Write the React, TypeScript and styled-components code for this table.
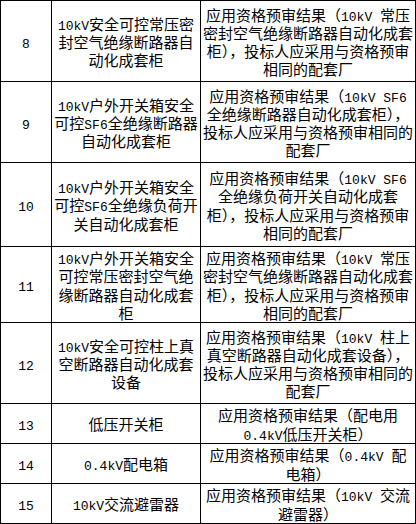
import React from "react";
import styled, { createGlobalStyle } from "styled-components";

const GlobalStyle = createGlobalStyle`
  html, body {
    margin: 0;
    padding: 0;
    background: #ffffff;
  }
  body {
    font-family: "Noto Sans CJK SC", "Noto Sans", sans-serif;
    color: #000000;
  }
`;

type Row = { no: string; height: number; name: string[]; desc: string[] };

const rows: Row[] = [
  {
    no: "8",
    height: 81,
    name: ["10kV安全可控常压密", "封空气绝缘断路器自", "动化成套柜"],
    desc: ["应用资格预审结果（10kV 常压", "密封空气绝缘断路器自动化成套", "柜），投标人应采用与资格预审", "相同的配套厂"],
  },
  {
    no: "9",
    height: 81,
    name: ["10kV户外开关箱安全", "可控SF6全绝缘断路器", "自动化成套柜"],
    desc: ["应用资格预审结果（10kV SF6", "全绝缘断路器自动化成套柜），", "投标人应采用与资格预审相同的", "配套厂"],
  },
  {
    no: "10",
    height: 84,
    name: ["10kV户外开关箱安全", "可控SF6全绝缘负荷开", "关自动化成套柜"],
    desc: ["应用资格预审结果（10kV SF6", "全绝缘负荷开关自动化成套", "柜），投标人应采用与资格预审", "相同的配套厂"],
  },
  {
    no: "11",
    height: 76,
    name: ["10kV户外开关箱安全", "可控常压密封空气绝", "缘断路器自动化成套", "柜"],
    desc: ["应用资格预审结果（10kV 常压", "密封空气绝缘断路器自动化成套", "柜），投标人应采用与资格预审", "相同的配套厂"],
  },
  {
    no: "12",
    height: 81,
    name: ["10kV安全可控柱上真", "空断路器自动化成套", "设备"],
    desc: ["应用资格预审结果（10kV 柱上", "真空断路器自动化成套设备），", "投标人应采用与资格预审相同的", "配套厂"],
  },
  {
    no: "13",
    height: 40,
    name: ["低压开关柜"],
    desc: ["应用资格预审结果（配电用", "0.4kV低压开关柜）"],
  },
  {
    no: "14",
    height: 40,
    name: ["0.4kV配电箱"],
    desc: ["应用资格预审结果（0.4kV 配", "电箱）"],
  },
  {
    no: "15",
    height: 40,
    name: ["10kV交流避雷器"],
    desc: ["应用资格预审结果（10kV 交流", "避雷器）"],
  },
];

const Table = styled.div<{ $rows: string }>`
  box-sizing: border-box;
  width: 416px;
  display: grid;
  grid-template-columns: 51px 149px 215px;
  grid-template-rows: ${(p) => p.$rows};
  border-top: 1px solid #000;
  border-left: 1px solid #000;
`;

const Cell = styled.div`
  box-sizing: border-box;
  border-right: 1px solid #000;
  border-bottom: 1px solid #000;
  display: flex;
  flex-direction: column;
  align-items: center;
  justify-content: center;
  padding-top: 2px;
  font-size: 15px;
  line-height: 18.2px;
  text-align: center;
  white-space: nowrap;
`;

const Line = styled.div`
  display: block;
  height: 18.2px;
`;

const Latin = styled.span`
  font-family: "Liberation Mono", "DejaVu Sans Mono", monospace;
  font-size: 13px;
`;

function renderText(text: string) {
  const parts = text.split(/([\x00-\x7F]+)/).filter((s) => s.length > 0);
  return parts.map((p, i) =>
    /^[\x00-\x7F]+$/.test(p) ? <Latin key={i}>{p}</Latin> : <React.Fragment key={i}>{p}</React.Fragment>
  );
}

function Lines({ lines }: { lines: string[] }) {
  return (
    <>
      {lines.map((l, i) => (
        <Line key={i}>{renderText(l)}</Line>
      ))}
    </>
  );
}

export default function App() {
  const template = rows.map((r) => `${r.height}px`).join(" ");
  return (
    <>
      <GlobalStyle />
      <Table $rows={template}>
        {rows.map((r) => (
          <React.Fragment key={r.no}>
            <Cell>
              <Line>{renderText(r.no)}</Line>
            </Cell>
            <Cell>
              <Lines lines={r.name} />
            </Cell>
            <Cell>
              <Lines lines={r.desc} />
            </Cell>
          </React.Fragment>
        ))}
      </Table>
    </>
  );
}
